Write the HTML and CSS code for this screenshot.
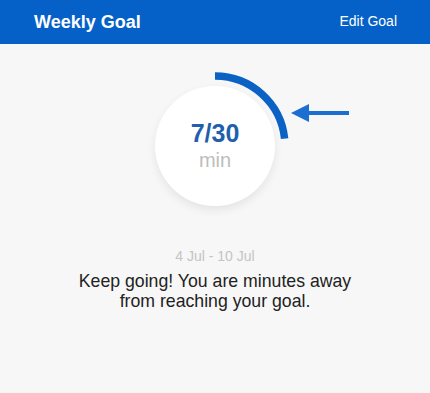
FILE: index.html
```html
<!DOCTYPE html>
<html>
<head>
<meta charset="utf-8">
<link rel="stylesheet" href="styles.css">
</head>
<body>
<header class="topbar">
  <h1 class="title">Weekly Goal</h1>
  <span class="edit">Edit Goal</span>
</header>
<main class="content">
  <div class="ring">
    <svg class="ring-svg" width="160" height="160" viewBox="0 0 160 160">
      <path d="M80 10 A70 70 0 0 1 149.62 72.68" fill="none" stroke="#0a62c4" stroke-width="7.5"/>
    </svg>
    <div class="disc">
      <span class="count">7/30</span>
      <span class="unit">min</span>
    </div>
    <svg class="pointer" width="58" height="18" viewBox="0 0 58 18">
      <line x1="16" y1="9" x2="58" y2="9" stroke="#1a6fd0" stroke-width="4"/>
      <polygon points="0,9 18,0 18,18" fill="#1a6fd0"/>
    </svg>
  </div>
  <p class="range">4 Jul - 10 Jul</p>
  <p class="message">Keep going! You are minutes away<br>from reaching your goal.</p>
</main>
</body>
</html>
```
FILE: styles.css
```css
html, body {
  margin: 0;
  padding: 0;
}
body {
  width: 430px;
  height: 393px;
  background: #f7f7f7;
  font-family: "Liberation Sans", Arial, sans-serif;
  overflow: hidden;
}
.topbar {
  height: 44px;
  background: #0561c7;
  display: flex;
  align-items: center;
  justify-content: space-between;
  padding: 0 33px 0 34px;
  color: #ffffff;
}
.title {
  margin: 0;
  font-size: 18px;
  font-weight: bold;
  line-height: 20px;
}
.edit {
  font-size: 14px;
  line-height: 16px;
  margin-top: -2px;
}
.content {
  display: flex;
  flex-direction: column;
  align-items: center;
  padding-top: 22px;
}
.ring {
  position: relative;
  width: 160px;
  height: 160px;
}
.ring-svg {
  display: block;
}
.disc {
  position: absolute;
  left: 20px;
  top: 20px;
  width: 120px;
  height: 120px;
  border-radius: 50%;
  background: #ffffff;
  box-shadow: 0 4px 10px rgba(0, 0, 0, 0.08);
  display: flex;
  flex-direction: column;
  align-items: center;
  justify-content: center;
}
.count {
  font-size: 25px;
  font-weight: bold;
  line-height: 26px;
  color: #1f5fae;
}
.unit {
  font-size: 20px;
  line-height: 24px;
  margin-top: 2px;
  color: #bdbdbd;
}
.pointer {
  position: absolute;
  left: 156px;
  top: 38px;
}
.range {
  margin: 22px 0 0;
  font-size: 14px;
  line-height: 16px;
  color: #c4c4c4;
}
.message {
  margin: 7px 0 0;
  font-size: 17.7px;
  line-height: 20px;
  color: #222222;
  text-align: center;
}
```
